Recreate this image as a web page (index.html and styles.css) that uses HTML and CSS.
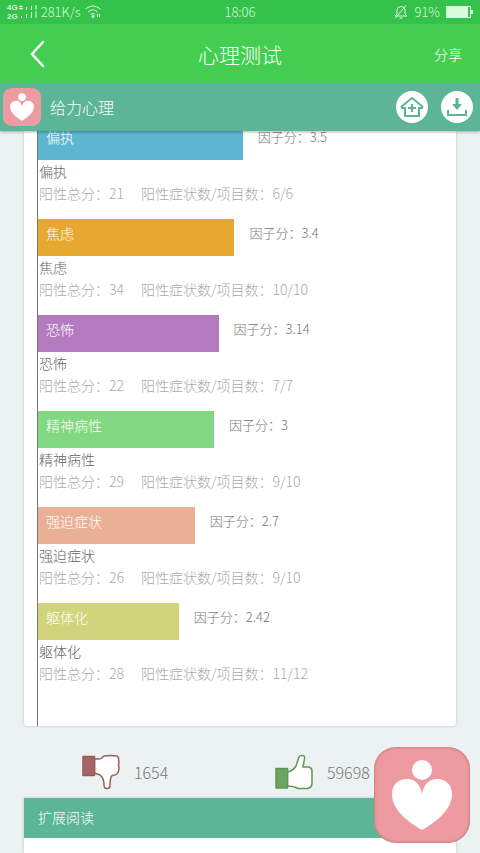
FILE: index.html
```html
<!DOCTYPE html>
<html lang="zh-CN">
<head>
  <meta charset="UTF-8">
  <meta name="viewport" content="width=device-width, initial-scale=1.0">
  <title>心理测试</title>
  <link rel="stylesheet" href="styles.css">
</head>
<body>
  <header class="header">
    <div class="status">
      <div class="status-left">
        <span class="network"><span>4G</span><span>2G</span></span>
        <svg width="18" height="14" viewBox="0 0 18 14" fill="none" stroke="currentColor">
          <path d="M2 0v5M0 1.500h4M0 3.500h4M7.500 2v3M12.500 1v4M17 0v5M2.500 11v2M7.500 9v4M12.500 7v6M17 6v7"/>
        </svg>
        <span class="speed">281K/s</span>
        <svg width="16" height="14" viewBox="0 0 16 14" fill="none" stroke="currentColor">
          <path d="M0.500 4Q8 -2 15.500 4M3 7Q8 2.500 12.500 7M5.500 9.500Q8 7.500 10 9.500"/>
          <circle cx="8" cy="11.500" r="1" fill="currentColor"/>
          <path d="M12.500 9v3M14.500 9v3"/>
        </svg>
      </div>
      <time class="clock">18:06</time>
      <div class="status-right">
        <svg width="14" height="14" viewBox="0 0 14 14" fill="none" stroke="currentColor">
          <path d="M1 11h12l-2-2V5Q11 1.500 7 1.500T3 5v4L1 11M5.500 13h3M12 0.500L1.500 13"/>
        </svg>
        <span>91%</span>
        <svg width="27" height="12" viewBox="0 0 27 12">
          <rect x="0.500" y="0.500" width="24" height="11" fill="none" stroke="currentColor"/>
          <path d="M1 1h21v10H1zM25 4h2v4h-2z" fill="currentColor"/>
        </svg>
      </div>
    </div>

    <nav class="navbar">
      <button class="back" type="button" aria-label="返回">
        <svg width="16" height="28" viewBox="0 0 16 28" fill="none" stroke="currentColor" stroke-width="2.500" stroke-linecap="round">
          <path d="M13 2L2 14l11 12"/>
        </svg>
      </button>
      <h1 class="title">心理测试</h1>
      <button class="share" type="button">分享</button>
    </nav>

    <div class="appbar">
      <svg class="logo" viewBox="0 0 96 96">
        <rect width="96" height="96" rx="22" fill="#ed9aa0"/>
        <circle cx="48" cy="23" r="10" fill="#fff"/>
        <path d="M48 47C46 36 40 32 33 32C24 32 18 38 18 47C18 63 34 75 48 83C62 75 78 63 78 47C78 38 72 32 63 32C56 32 50 36 48 47Z" fill="#fff"/>
      </svg>
      <span class="app-name">给力心理</span>
      <a class="round" href="#" aria-label="首页">
        <svg width="32" height="32" viewBox="0 0 32 32" fill="none" stroke="currentColor" stroke-width="2">
          <path d="M5 16L16 7l11 9M5 17h4v8h14v-8h4M16 13v8M12 17h8"/>
        </svg>
      </a>
      <a class="round" href="#" aria-label="下载">
        <svg width="32" height="32" viewBox="0 0 32 32" fill="none" stroke="currentColor" stroke-width="2">
          <path d="M7 19v5h18v-5"/>
          <path d="M16 7v8" stroke-width="3"/>
          <path d="M11 13h10l-5 6z" fill="currentColor" stroke="none"/>
        </svg>
      </a>
    </div>
  </header>

  <main class="content">
    <section class="card">
      <div class="chart">
        <div class="factor">
          <div class="row"><div class="bar blue" style="width: 49%">偏执</div><span class="score">因子分：3.5</span></div>
          <h2 class="name">偏执</h2>
          <p class="detail"><span>阳性总分：21</span><span>阳性症状数/项目数：6/6</span></p>
        </div>
        <div class="factor">
          <div class="row"><div class="bar orange" style="width: 47%">焦虑</div><span class="score">因子分：3.4</span></div>
          <h2 class="name">焦虑</h2>
          <p class="detail"><span>阳性总分：34</span><span>阳性症状数/项目数：10/10</span></p>
        </div>
        <div class="factor">
          <div class="row"><div class="bar purple" style="width: 43.2%">恐怖</div><span class="score">因子分：3.14</span></div>
          <h2 class="name">恐怖</h2>
          <p class="detail"><span>阳性总分：22</span><span>阳性症状数/项目数：7/7</span></p>
        </div>
        <div class="factor">
          <div class="row"><div class="bar green" style="width: 42.1%">精神病性</div><span class="score">因子分：3</span></div>
          <h2 class="name">精神病性</h2>
          <p class="detail"><span>阳性总分：29</span><span>阳性症状数/项目数：9/10</span></p>
        </div>
        <div class="factor">
          <div class="row"><div class="bar peach" style="width: 37.5%">强迫症状</div><span class="score">因子分：2.7</span></div>
          <h2 class="name">强迫症状</h2>
          <p class="detail"><span>阳性总分：26</span><span>阳性症状数/项目数：9/10</span></p>
        </div>
        <div class="factor">
          <div class="row"><div class="bar olive" style="width: 33.7%">躯体化</div><span class="score">因子分：2.42</span></div>
          <h2 class="name">躯体化</h2>
          <p class="detail"><span>阳性总分：28</span><span>阳性症状数/项目数：11/12</span></p>
        </div>
      </div>
    </section>

    <div class="votes">
      <button class="vote" type="button">
        <svg width="38" height="36" viewBox="0 0 38 36" stroke="#9c5b5b" stroke-width="1.500" stroke-linejoin="round">
          <path d="M12.500 5H17Q19 5 22 2Q28 1 35 2Q37 3 36.500 6L37 8L36.500 11L37 14L36.500 17Q36 21 30 21.500Q28 24 28 32Q28 34.500 25 34.500Q22 34.500 22 31Q22 24 18 21L12.500 19Z" fill="#fff"/>
          <rect x="1" y="2.500" width="11.500" height="19" fill="#a46663"/>
        </svg>
        <span>1654</span>
      </button>
      <button class="vote" type="button">
        <svg width="38" height="36" viewBox="0 0 38 36" stroke="#609653" stroke-width="1.500" stroke-linejoin="round">
          <path d="M12.500 18Q18 17 21 12L24 3Q25 1 28 1.500Q30 2 29.500 5L28 13H34Q37 14 37 17V29Q37 34 32 34.500H23Q19 32 12.500 32Z" fill="#fff"/>
          <rect x="1" y="14.500" width="11.500" height="19.500" fill="#6ba661"/>
        </svg>
        <span>59698</span>
      </button>
    </div>

    <section class="reading">
      <h2 class="reading-title">扩展阅读</h2>
    </section>
  </main>

  <button class="floating" type="button" aria-label="给力心理">
    <svg viewBox="0 0 96 96">
      <circle cx="48" cy="23" r="10" fill="#fff"/>
      <path d="M48 47C46 36 40 32 33 32C24 32 18 38 18 47C18 63 34 75 48 83C62 75 78 63 78 47C78 38 72 32 63 32C56 32 50 36 48 47Z" fill="#fff"/>
    </svg>
  </button>
</body>
</html>
```
FILE: styles.css
```css
* {
  margin: 0;
  padding: 0;
  box-sizing: border-box;
}

body {
  display: flex;
  flex-direction: column;
  min-height: 100vh;
  background: #ebf2f1;
  color: #777;
  font-family: "Noto Sans CJK SC", sans-serif;
  font-size: 14px;
  font-weight: 300;
  line-height: 22px;
}

button {
  border: none;
  background: none;
  color: inherit;
  font: inherit;
  cursor: pointer;
}

svg {
  display: block;
  flex: none;
}

h1,
h2 {
  font-size: 14px;
  font-weight: 300;
}

.header {
  position: sticky;
  top: 0;
  z-index: 2;
  color: #fff;
  box-shadow: 0 1px 3px rgba(0, 0, 0, 0.3);
}

.status {
  display: grid;
  grid-template-columns: 1fr auto 1fr;
  align-items: center;
  height: 24px;
  padding: 0 7px;
  background: #34c24a;
  color: #d9f8dc;
  font-size: 13px;
}

.status-left,
.status-right {
  display: flex;
  align-items: center;
  gap: 4px;
}

.status-right {
  justify-content: flex-end;
  gap: 6px;
}

.network {
  display: flex;
  flex-direction: column;
  font: bold 8px/9px "Liberation Sans", sans-serif;
}

.network + svg {
  margin-left: -3px;
}

.navbar {
  display: grid;
  grid-template-columns: 1fr auto 1fr;
  align-items: center;
  height: 59px;
  padding: 0 18px;
  background: #44ce51;
}

.back {
  justify-self: start;
  padding: 0 12px;
}

.title {
  font-size: 21px;
  line-height: 30px;
}

.share {
  justify-self: end;
}

.appbar {
  display: flex;
  align-items: center;
  gap: 13px;
  height: 48px;
  padding: 0 7px 0 3px;
  background: #5bb596;
}

.logo {
  width: 38px;
  height: 38px;
}

.app-name {
  flex: 1;
  margin-left: -4px;
  font-size: 16px;
}

.round {
  border-radius: 50%;
  background: #fff;
  color: #5bb596;
}

.content {
  display: flex;
  flex: 1;
  flex-direction: column;
  padding: 0 24px;
}

.card {
  margin-top: -8px;
  padding-left: 13px;
  border-radius: 0 0 3px 3px;
  background: #fff;
  box-shadow: 0 0 3px rgba(0, 0, 0, 0.2);
}

.chart {
  padding-bottom: 27px;
  border-left: 1px solid #777;
}

.factor {
  height: 96px;
}

.row {
  display: flex;
  gap: 15px;
}

.bar {
  height: 37px;
  padding: 3px 8px;
  color: #fff;
}

.blue {
  background: #5db5d2;
}

.orange {
  background: #e7a832;
}

.purple {
  background: #b57bc1;
}

.green {
  background: #82d881;
}

.peach {
  background: #e9b095;
}

.olive {
  background: #d1d47b;
}

.score {
  padding-top: 3px;
  font-size: 13px;
}

.name {
  padding-left: 1px;
  color: #666;
}

.detail {
  display: flex;
  gap: 17px;
  padding-left: 1px;
  color: #aaa;
}

.votes {
  display: grid;
  grid-template-columns: 1fr 1fr;
  gap: 12px;
  justify-items: start;
  padding: 28px 0 8px 58px;
}

.vote {
  display: flex;
  align-items: center;
  gap: 14px;
  font-size: 16px;
}

.reading {
  flex: 1;
  min-height: 55px;
  background: #fff;
  box-shadow: 0 0 3px rgba(0, 0, 0, 0.2);
}

.reading-title {
  padding: 8px 14px 10px;
  background: #5bb596;
  color: #fff;
}

.floating {
  position: fixed;
  right: 10px;
  bottom: 10px;
  z-index: 3;
  width: 96px;
  height: 96px;
  border-radius: 22px;
  background: #ed9aa0;
  box-shadow: inset 0 0 3px rgba(100, 40, 50, 0.5);
}
```
